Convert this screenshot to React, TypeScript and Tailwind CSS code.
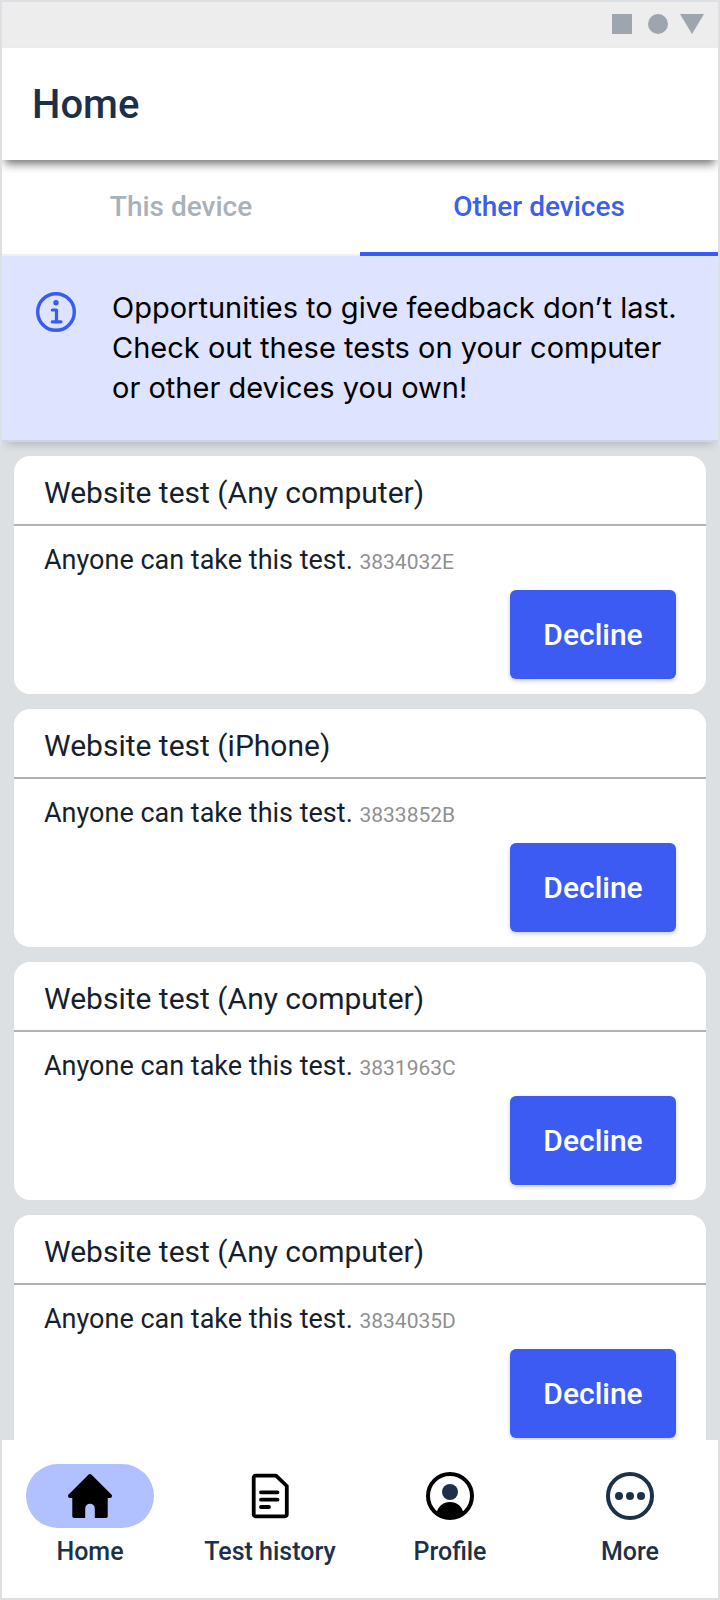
import { useState } from "react";
import type { ReactNode } from "react";

interface Test {
  id: string;
  title: string;
  summary: string;
}

const tests: Test[] = [
  { id: "3834032E", title: "Website test (Any computer)", summary: "Anyone can take this test." },
  { id: "3833852B", title: "Website test (iPhone)", summary: "Anyone can take this test." },
  { id: "3831963C", title: "Website test (Any computer)", summary: "Anyone can take this test." },
  { id: "3834035D", title: "Website test (Any computer)", summary: "Anyone can take this test." },
];

function HomeIcon() {
  return (
    <svg viewBox="0 0 48 48" className="size-12" aria-hidden="true">
      <path
        d="M22.4 2.8a2.2 2.2 0 0 1 3.2 0L45.400 22.600c1.200 1.200.6 3.200-1.200 3.400H41.700V44.200a1.800 1.800 0 0 1-1.800 1.800H28.800V36.500a4.800 4.800 0 0 0-9.600 0V46H8.100a1.800 1.800 0 0 1-1.800-1.800V26H3.800C2 25.800 1.400 23.800 2.600 22.600Z"
        fill="#000"
      />
    </svg>
  );
}

function HistoryIcon() {
  return (
    <svg viewBox="0 0 48 48" className="size-12" fill="none" stroke="#000" aria-hidden="true">
      <path d="M9.500 3.700H30L40.800 14V42.500a1.800 1.800 0 0 1-1.800 1.800H9.500a1.800 1.800 0 0 1-1.800-1.800V5.500a1.800 1.800 0 0 1 1.800-1.800Z" strokeWidth="3.800" strokeLinejoin="round" />
      <path d="M15 20.300H31.500M15 27.700H31.500M15 35H23" strokeWidth="3.800" strokeLinecap="round" />
    </svg>
  );
}

function ProfileIcon() {
  return (
    <svg viewBox="0 0 48 48" className="size-12" aria-hidden="true">
      <circle cx="24" cy="24" r="22" fill="none" stroke="#000" strokeWidth="4" />
      <circle cx="24" cy="20" r="8" fill="#1c304a" />
      <path d="M10.500 41C12 34.500 17 30 24 30s12 4.500 13.500 11A22 22 0 0 1 10.500 41Z" fill="#000" />
    </svg>
  );
}

function MoreIcon() {
  return (
    <svg viewBox="0 0 48 48" className="size-12" fill="#1c304a" aria-hidden="true">
      <circle cx="24" cy="24" r="22" fill="none" stroke="#1c304a" strokeWidth="4" />
      <circle cx="13" cy="24" r="4" />
      <circle cx="24" cy="24" r="4" />
      <circle cx="35" cy="24" r="4" />
    </svg>
  );
}

function InfoIcon() {
  return (
    <svg viewBox="0 0 40 40" className="mt-9 size-10 shrink-0" fill="none" stroke="#365cf5" aria-hidden="true">
      <circle cx="20" cy="20" r="18.300" strokeWidth="3.400" />
      <circle cx="20" cy="10.700" r="2.700" fill="#365cf5" stroke="none" />
      <path d="M16.300 18H20.500V29.800M16.300 29.800H25" strokeWidth="3.200" strokeLinecap="round" strokeLinejoin="round" />
    </svg>
  );
}

function StatusBar() {
  return (
    <div className="flex h-[46px] shrink-0 items-center justify-end bg-[#ededed] pr-3.5 pb-0.5">
      <svg viewBox="0 0 92 20" className="h-5 w-[92px]" fill="#9ea5ae" aria-hidden="true">
        <rect width="20" height="20" />
        <circle cx="46" cy="10" r="10" />
        <path d="M68 0H92L80 20Z" />
      </svg>
    </div>
  );
}

function TestCard({ test }: { test: Test }) {
  return (
    <li className="flex h-[238px] shrink-0 flex-col rounded-2xl bg-white text-[#171f2e]">
      <h2 className="flex h-[70px] items-center border-b-2 border-[#b1b1b1] px-[30px] pt-1.5 text-[30px] leading-10">
        {test.title}
      </h2>
      <p className="h-[52px] px-[30px] pt-4 text-[27px] leading-9">
        {test.summary} <span className="text-[21px] text-[#909090]">{test.id}</span>
      </p>
      <button
        type="button"
        className="mt-3 mr-[30px] h-[89px] w-[166px] self-end rounded-[6px] bg-[#3c5bf3] text-[30px] font-medium text-white shadow-[0_2px_4px_rgba(0,0,0,0.2)]"
      >
        Decline
      </button>
    </li>
  );
}

const navItems: { label: string; icon: ReactNode }[] = [
  { label: "Home", icon: <HomeIcon /> },
  { label: "Test history", icon: <HistoryIcon /> },
  { label: "Profile", icon: <ProfileIcon /> },
  { label: "More", icon: <MoreIcon /> },
];

export default function App() {
  const [tab, setTab] = useState("Other devices");

  return (
    <div className="flex h-screen flex-col overflow-hidden border-2 border-[#dce0e4] bg-white font-[Roboto,sans-serif]">
      <StatusBar />
      <header className="z-10 flex h-28 shrink-0 items-center bg-white px-[30px] pt-0.5 shadow-[0_7px_9px_-3px_rgba(0,0,0,0.55)]">
        <h1 className="text-[40px] font-medium text-[#1c304a]">Home</h1>
      </header>
      <div role="tablist" className="flex h-24 shrink-0">
        {["This device", "Other devices"].map((name) => (
          <button
            key={name}
            type="button"
            role="tab"
            aria-selected={tab === name}
            onClick={() => setTab(name)}
            className={
              tab === name
                ? "flex-1 border-b-4 border-[#365cf5] pt-0.5 text-[28px] font-medium text-[#3a5fe8]"
                : "flex-1 border-b-2 border-[#f0f0f2] text-[28px] font-medium text-[#a9b1b9]"
            }
          >
            {name}
          </button>
        ))}
      </div>
      <section className="z-10 flex shrink-0 gap-9 border-b-2 border-[#cdd4ee] bg-[#dee3ff] pl-[34px] shadow-[0_7px_9px_-5px_rgba(0,0,0,0.2)]">
        <InfoIcon />
        <p className="pt-8 pr-8 pb-8 font-[Inter,sans-serif] text-[29px] leading-10 text-black">
          Opportunities to give feedback don’t last. Check out these tests on your computer or other devices you own!
        </p>
      </section>
      <main className="min-h-0 flex-1 overflow-hidden bg-[#dce0e3] px-3 pt-3.5">
        <ul className="flex flex-col gap-[15px]">
          {tests.map((test) => (
            <TestCard key={test.id} test={test} />
          ))}
        </ul>
      </main>
      <nav className="-mx-0.5 grid h-[158px] shrink-0 grid-cols-4 pt-6">
        {navItems.map(({ label, icon }, i) => (
          <a key={label} href="#" className="flex flex-col items-center gap-2 text-[25px] leading-8 font-medium text-[#1c304a]">
            <span className={i === 0 ? "flex h-16 w-32 items-center justify-center rounded-full bg-[#b1c0ff]" : "flex h-16 items-center"}>
              {icon}
            </span>
            {label}
          </a>
        ))}
      </nav>
    </div>
  );
}
